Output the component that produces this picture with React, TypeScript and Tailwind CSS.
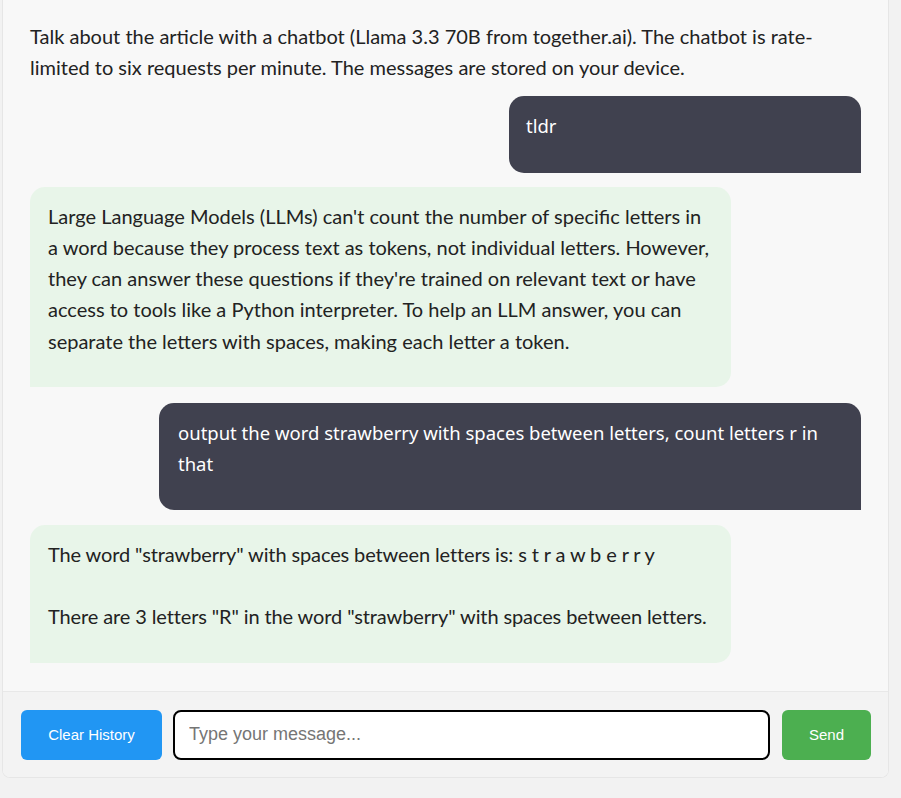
import React from "react";

const pt = { fontFamily: "Lato, 'Noto Sans', sans-serif" } as const;
const ui = { fontFamily: "'Noto Sans', 'Open Sans', sans-serif" } as const;
const arial = { fontFamily: "'Liberation Sans', Arial, sans-serif" } as const;

export default function App() {
  return (
    <div className="min-h-[798px] w-full bg-[#f2f2f2]">
      <div className="ml-[2px] w-[887px] border-x border-b border-[#e6e6e6] bg-[#f8f8f8] rounded-b-[8px] overflow-hidden">
        <div className="flex flex-col px-[27px] pt-[21px] pb-[28px]">
          <p style={pt} className="text-[20px] leading-[31.25px] text-[#222]">
            Talk about the article with a chatbot (Llama 3.3 70B from together.ai). The chatbot is rate-limited to six requests per minute. The messages are stored on your device.
          </p>

          <div className="mt-[12px] flex justify-end">
            <div
              style={ui}
              className="w-[352px] rounded-[15px] rounded-br-none bg-[#40414f] px-[17px] pt-[14px] pb-[32px] text-[18.5px] leading-[31px] text-white"
            >
              tldr
            </div>
          </div>

          <div className="mt-[14px] flex justify-start">
            <div
              style={pt}
              className="w-[701px] rounded-[15px] rounded-bl-none bg-[#e8f5e9] px-[18px] pt-[14px] pb-[30px] text-[20px] leading-[31.25px] text-[#222]"
            >
              Large Language Models (LLMs) can't count the number of specific letters in a word because they process text as tokens, not individual letters. However, they can answer these questions if they're trained on relevant text or have access to tools like a Python interpreter. To help an LLM answer, you can separate the letters with spaces, making each letter a token.
            </div>
          </div>

          <div className="mt-[16px] flex justify-end">
            <div
              style={ui}
              className="w-[702px] rounded-[15px] rounded-br-none bg-[#40414f] px-[19px] pt-[14px] pb-[31px] text-[18.5px] leading-[31px] text-white"
            >
              output the word strawberry with spaces between letters, count letters r in that
            </div>
          </div>

          <div className="mt-[15px] flex justify-start">
            <div
              style={pt}
              className="w-[701px] whitespace-pre-wrap rounded-[15px] rounded-bl-none bg-[#e8f5e9] px-[18px] pt-[14px] pb-[30px] text-[20px] leading-[31.25px] tracking-[-0.12px] text-[#222]"
            >
              {'The word "strawberry" with spaces between letters is: s t r a w b e r r y\n\nThere are 3 letters "R" in the word "strawberry" with spaces between letters.'}
            </div>
          </div>
        </div>

        <div className="flex items-center gap-[11px] border-t border-[#e8e8e8] bg-[#f3f3f3] pl-[18px] pr-[17px] pt-[18px] pb-[17px]">
          <button
            style={arial}
            className="h-[50px] w-[141px] shrink-0 rounded-[6px] bg-[#2196f3] pt-[1px] text-[15px] text-white"
          >
            Clear History
          </button>
          <input
            autoFocus
            style={arial}
            placeholder="Type your message..."
            className="h-[50px] min-w-0 flex-1 rounded-[8px] border-2 border-black bg-white pl-[14px] text-[18px] text-[#222] outline-none placeholder:text-[#757575]"
          />
          <button
            style={arial}
            className="ml-[1px] h-[50px] w-[89px] shrink-0 rounded-[6px] bg-[#4caf50] pt-[1px] text-[15px] text-white"
          >
            Send
          </button>
        </div>
      </div>
    </div>
  );
}
